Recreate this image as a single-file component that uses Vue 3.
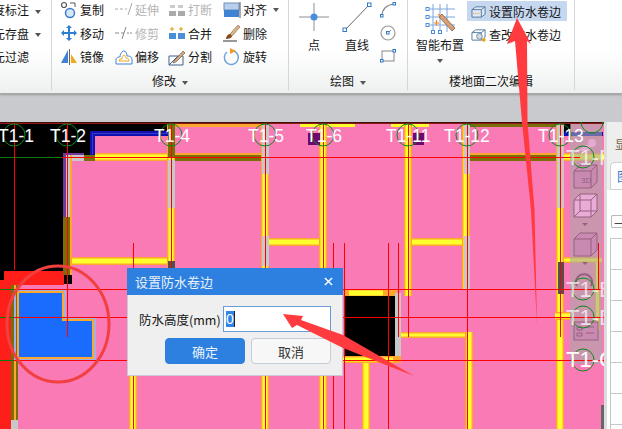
<template>
  <div class="app">
    <!-- Ribbon -->
    <header class="ribbon">
      <section class="group group-cut">
        <div class="cut-row"><span>度标注</span><i class="caret"></i></div>
        <div class="cut-row"><span>元存盘</span><i class="caret"></i></div>
        <div class="cut-row"><span>元过滤</span></div>
      </section>

      <section class="group group-modify">
        <div class="tools">
          <div class="tool">
            <svg viewBox="0 0 18 18"><circle cx="4" cy="4" r="2.500" fill="none" stroke="#555" stroke-width="1.200"/><circle cx="10" cy="12" r="4.500" fill="#d5e6f7" stroke="#3d7cc9" stroke-width="1.500"/><path d="M10 2h5v4" fill="none" stroke="#555"/></svg>
            <span>复制</span>
          </div>
          <div class="tool off">
            <svg viewBox="0 0 18 18"><path d="M0 8h3M5 8h3M10 8h2M13 14l4-12" stroke="#aaa" fill="none"/></svg>
            <span>延伸</span>
          </div>
          <div class="tool off">
            <svg viewBox="0 0 18 18"><path d="M2 4h5v3H2zM10 4h5v3h-5z" fill="#ccc"/><path d="M1 10h7v5H1zM10 10h7v5h-7z" fill="#aaa"/></svg>
            <span>打断</span>
          </div>
          <div class="tool">
            <svg viewBox="0 0 18 18"><rect x="1" y="2" width="15" height="7" fill="#b8d0ee" stroke="#6b8fb8"/><rect x="1" y="9" width="15" height="7" fill="#3f83d4"/><path d="M17 1v16" stroke="#555"/></svg>
            <span>对齐</span><i class="caret"></i>
          </div>
          <div class="tool">
            <svg viewBox="0 0 18 18"><path d="M9 1l3 3h-2v4h4V6l3 3-3 3v-2h-4v4h2l-3 3-3-3h2v-4H4v2L1 9l3-3v2h4V4H6z" fill="#2f7fd0"/></svg>
            <span>移动</span>
          </div>
          <div class="tool off">
            <svg viewBox="0 0 18 18"><path d="M0 9h4M6 9h3M12 9h2M15 9h2M7 15l4-12" stroke="#888" fill="none"/></svg>
            <span>修剪</span>
          </div>
          <div class="tool">
            <svg viewBox="0 0 18 18"><path d="M1 9h7v6H1zM10 9h7v6h-7z" fill="#4a8ed8"/><path d="M4 3v4M2 5h4M13 3v4M11 5h4" stroke="#e8a020" stroke-width="1.200"/></svg>
            <span>合并</span>
          </div>
          <div class="tool">
            <svg viewBox="0 0 18 18"><path d="M7 10l8-9 2 2-8 9z" fill="#d9b98a" stroke="#7a5a3a" stroke-width=".6"/><path d="M3 15c0-3 2-5 4-5l2 2c0 2-3 3-6 3z" fill="#8a4a20"/><path d="M0 17h14" stroke="#333"/></svg>
            <span>删除</span>
          </div>
          <div class="tool">
            <svg viewBox="0 0 18 18"><path d="M8 2L1 15h7z" fill="#3f83d4"/><path d="M11 6l6 9h-6z" fill="#f2a81d"/><path d="M9.500 1v16" stroke="#666"/></svg>
            <span>镜像</span>
          </div>
          <div class="tool">
            <svg viewBox="0 0 18 18"><path d="M1 12c0-3 3-3 4-3 0-3 2-6 4-6s3 3 3 5c2 0 5 0 5 4v4H1z" fill="#fff" stroke="#3f83d4"/><path d="M4 13c0-2 2-2 3-2 0-2 1-4 2-4s2 2 2 3c2 0 3 1 3 3z" fill="none" stroke="#f2a81d"/></svg>
            <span>偏移</span>
          </div>
          <div class="tool">
            <svg viewBox="0 0 18 18"><path d="M1 8h14v9H1z" fill="none" stroke="#44608c"/><path d="M6 13l9-10 2 2-9 9-3 1z" fill="#d9a77a" stroke="#555" stroke-width=".6"/><path d="M1 17l9-9" stroke="#44608c"/></svg>
            <span>分割</span>
          </div>
          <div class="tool">
            <svg viewBox="0 0 18 18"><path d="M11 3a7 7 0 1 1-7 1" fill="none" stroke="#6fa3dc" stroke-width="1.500"/><path d="M7 0l6 3-6 3z" fill="#f29a2e"/></svg>
            <span>旋转</span>
          </div>
        </div>
        <div class="group-label">修改<i class="caret"></i></div>
      </section>

      <section class="group group-draw">
        <div class="draw-row">
          <div class="big-tool tool-point">
            <svg viewBox="0 0 30 30" width="30" height="30"><path d="M0 15h30M15 1v28" stroke="#8a9098"/><circle cx="15" cy="15" r="3.500" fill="#4a8de0"/></svg>
            <span>点</span>
          </div>
          <div class="big-tool tool-line">
            <svg viewBox="0 0 30 30" width="30" height="30"><path d="M3 28L27 3" stroke="#666"/><rect x="1" y="26" width="3.500" height="3.500" fill="#fff" stroke="#2f78c8"/><rect x="25.500" y="1" width="3.500" height="3.500" fill="#fff" stroke="#2f78c8"/></svg>
            <span>直线</span>
          </div>
          <div class="small-tools">
            <svg viewBox="0 0 16 16"><path d="M2 14C2 7 7 3 14 2" fill="none" stroke="#888" stroke-width="1.200"/><rect x="0.500" y="12.500" width="2.500" height="2.500" fill="#fff" stroke="#2f78c8"/><rect x="13" y="0.500" width="2.500" height="2.500" fill="#fff" stroke="#2f78c8"/></svg>
            <svg viewBox="0 0 16 16"><circle cx="8" cy="8" r="7" fill="none" stroke="#999" stroke-width="1.200"/><path d="M8 8l3-3" stroke="#888"/><rect x="6.500" y="6.500" width="2.500" height="2.500" fill="#fff" stroke="#2f78c8"/></svg>
            <svg viewBox="0 0 16 14"><rect x="2" y="2" width="12" height="10" fill="none" stroke="#888"/><rect x="0.500" y="10.500" width="2.500" height="2.500" fill="#fff" stroke="#2f78c8"/><rect x="13" y="0.500" width="2.500" height="2.500" fill="#fff" stroke="#2f78c8"/></svg>
          </div>
        </div>
        <div class="group-label">绘图<i class="caret"></i></div>
      </section>

      <section class="group group-floor">
        <div class="floor-row">
          <div class="big-tool tool-smart">
            <svg viewBox="0 0 30 32" width="30" height="32"><path d="M8 1v28M15 1v28M22 1v28M3 6h27M3 14h27M3 22h27" stroke="#7da8dc"/><rect x="1" y="4.500" width="3" height="3" fill="#fff" stroke="#4a8de0"/><rect x="1" y="12.500" width="3" height="3" fill="#fff" stroke="#4a8de0"/><rect x="1" y="20.500" width="3" height="3" fill="#fff" stroke="#4a8de0"/><rect x="6.500" y="27.500" width="3" height="3" fill="#fff" stroke="#4a8de0"/><rect x="13.500" y="27.500" width="3" height="3" fill="#fff" stroke="#4a8de0"/><path d="M14 14l3-3 13 14-3 3z" fill="#d8a070" stroke="#6d5a50" stroke-width=".7"/><path d="M13 11l3 3M9 20h5M11.500 17v6" stroke="#f0862a" stroke-width="1.200"/></svg>
            <span>智能布置</span>
            <i class="caret caret-below"></i>
          </div>
          <div class="edge-tools">
            <div class="edge-tool active">
              <svg viewBox="0 0 16 16"><path d="M1 6l4-3h10v8l-4 3H1z" fill="#dfe9f5" stroke="#527a9a"/><path d="M1 6h10v8M11 6l4-3" fill="none" stroke="#527a9a"/><path d="M2 10h8" stroke="#e0953a" stroke-dasharray="1 1"/></svg>
              <span>设置防水卷边</span>
            </div>
            <div class="edge-tool">
              <svg viewBox="0 0 16 16"><path d="M1 6l4-3h10v8l-4 3H1z" fill="#fff" stroke="#527a9a"/><path d="M1 6h10v8M11 6l4-3" fill="none" stroke="#527a9a"/><circle cx="9" cy="10" r="3" fill="#cfe0f2" stroke="#789"/><rect x="12" y="12" width="3.500" height="3.500" fill="#f2a020" transform="rotate(45 13.700 13.700)"/></svg>
              <span>查改防水卷边</span>
            </div>
          </div>
        </div>
        <div class="group-label">楼地面二次编辑</div>
      </section>
    </header>

    <div class="band"></div>

    <div class="work">
      <!-- CAD canvas -->
      <main class="canvas">
        <svg class="drawing" viewBox="0 122 604 307" width="604" height="307">
          <rect x="0" y="122" width="604" height="307" fill="#000"/>
          <rect v-for="(r, i) in shapes" :key="i" :x="r[0]" :y="r[1]" :width="r[2]" :height="r[3]" :fill="r[4]"/>
          <path d="M15 290h50v28h30v42H15z" fill="none" stroke="#9fb2e6" stroke-width="2"/>
          <path d="M18 292h45v28h30v38H18z" fill="#1a6cff" stroke="#ffa62e" stroke-width="2"/>
          <path d="M92.500 155V133.500H168" fill="none" stroke="#1010b0" stroke-width="5"/>
          <path d="M92.500 154V133.500H168" fill="none" stroke="#3a3ad0" stroke-width="1"/>

          <!-- Floating view toolbar -->
          <rect x="570" y="124" width="32" height="240" fill="#a8a8a8" opacity=".6"/>
          <circle cx="592" cy="143" r="4" fill="#e7a9cf"/>
          <path d="M574 153l12-8h4v6h-12z" fill="#e7a9cf"/>
          <g fill="#c98ab2" stroke="#96607f">
            <path d="M574 171l6-6h17v17l-6 6h-17z"/>
            <path d="M574 171h17v17M591 171l6-6" fill="none"/>
          </g>
          <text x="581" y="183" class="mini">3D</text>
          <g fill="#e8acd6" stroke="#96607f">
            <path d="M574 200l6-6h17v17l-6 6h-17z"/>
            <path d="M574 200h17v17M591 200l6-6M580 194v17h17M574 217l6-6" fill="none"/>
          </g>
          <path d="M582 223h6l-3 3z" fill="#96607f"/>
          <g fill="#c98ab2" stroke="#96607f">
            <path d="M574 239l6-6h17v17l-6 6h-17z"/>
            <path d="M574 239h17v17M591 239l6-6" fill="none"/>
          </g>
          <path d="M582 262h6l-3 3z" fill="#96607f"/>
          <path d="M577 286a8 8 0 1 1 14 0" fill="none" stroke="#96607f" stroke-width="2"/>
          <rect x="574" y="322" width="24" height="18" fill="#c98ab2" stroke="#96607f"/>
          <path d="M577 327h5v3h-5zM577 333h5v3h-5zM586 327h8M586 333h8" stroke="#96607f" fill="none"/>

          <line v-for="(l, i) in lines" :key="'l' + i" :x1="l[0]" :y1="l[1]" :x2="l[2]" :y2="l[3]" :stroke="l[4] || '#ff0000'" stroke-width="1"/>
          <circle v-for="(c, i) in circles" :key="'c' + i" :cx="c[0]" :cy="c[1]" r="11" fill="none" stroke="#0c8a1c" stroke-width="1"/>
          <text v-for="a in axisLabels" :key="a.text + a.y" :x="a.x" :y="a.y" class="axis" :class="{ wide: a.wide }" :opacity="a.dim ? .7 : 1">{{ a.text }}</text>
        </svg>

        <!-- Dialog -->
        <div class="dialog">
          <div class="dialog-title">
            <span>设置防水卷边</span>
            <svg viewBox="0 0 10 10" width="9" height="9"><path d="M1 1l8 8M9 1L1 9" stroke="#fff" stroke-width="1.500"/></svg>
          </div>
          <div class="dialog-body">
            <div class="field">
              <label>防水高度(mm)</label>
              <div class="input"><span class="selected">0</span><i class="cursor"></i></div>
            </div>
            <div class="actions">
              <button class="btn primary">确定</button>
              <button class="btn">取消</button>
            </div>
          </div>
        </div>
      </main>

      <!-- Properties panel edge -->
      <aside class="side">
        <div class="side-head">显</div>
        <div class="side-tab">图</div>
        <div class="side-tool"><div class="side-minus">—</div></div>
        <div class="side-grid">
          <div v-for="n in 7" :key="n" class="side-row"></div>
        </div>
      </aside>
    </div>

    <!-- Annotations on top of everything -->
    <svg class="marks" viewBox="0 0 622 429" width="622" height="429">
      <ellipse cx="58" cy="324" rx="51" ry="58" fill="none" stroke="#f23f3f" stroke-width="3"/>
      <path d="M517 18L507 44L515 41L522 122L531 210L537 325L534.500 210L527.500 122L527 41L531 44Z" fill="#ff3b3f"/>
      <path d="M283 314L303 316L301 320L343 335L414 376L343 348L297 325L292 328Z" fill="#ff3b3f"/>
    </svg>
  </div>
</template>

<script setup>
const PINK = "#fa7ab6";
const YEL = "#ffff2e";
const ORG = "#ffa62e";
const OLV = "#7a6e08";
const GRY = "#c8c8c8";
const DRK = "#505050";
const RED = "#ff1f1a";

// vertical and horizontal wall: orange edge with a yellow core
const vw = (x, y, h) => [[x, y, 8, h, ORG], [x + 1.5, y, 5, h, YEL]];
const hw = (x, y, w, t = 8) => [[x, y, w, t, ORG], [x, y + 1.5, w, t - 3, YEL]];

const shapes = [
  [0, 122.5, 604, 1.5, "#8a1a14"],
  [72, 124, 532, 305, PINK],
  [18, 284, 60, 145, PINK],
  [0, 124, 95, 31, "#000"],
  [95, 124, 73, 10, "#000"],
  [0, 155, 63, 116, "#000"],

  // left side, red block and wall
  [4, 271, 60, 14, RED],
  [0, 280, 11, 149, RED],
  [11, 285, 7, 144, OLV],
  [14, 285, 2, 144, ORG],
  [11, 420, 7, 9, GRY],
  [63, 153, 21, 2, "#6b3a9a"],
  [63, 155, 3, 62, "#6b3a9a"],
  [66, 155, 6, 62, GRY],
  [70, 155, 2, 62, ORG],
  [63, 217, 9, 58, OLV],
  [70, 217, 2, 58, ORG],

  // top beams
  [72, 155, 12, 6, GRY],
  [84, 155, 11, 6, OLV],
  [95, 153, 73, 8, ORG],
  [95, 154.5, 73, 5, YEL],
  [175, 124, 86, 3, ORG],
  [175, 153, 87, 8, ORG],
  [175, 155, 87, 6, OLV],
  [470, 153, 88, 8, ORG],
  [470, 155, 88, 6, OLV],
  [470, 124, 88, 3, OLV],
  [300, 124, 55, 3, YEL],
  [391, 124, 38, 3, YEL],
  [563, 132, 40, 4, "#1010b0"],
  [563, 124, 8, 8, "#000"],
  [564, 153, 40, 8, ORG],
  [564, 154.5, 40, 5, YEL],

  // columns
  ...vw(167, 124, 145),
  [168, 124, 7, 33, OLV],
  [168, 160, 7, 48, GRY],
  [168, 261, 7, 8, DRK],
  ...vw(261, 124, 305),
  [262, 124, 7, 50, GRY],
  [262, 236, 7, 30, GRY],
  ...vw(319, 124, 305),
  ...vw(404, 124, 172),
  ...vw(462, 124, 166),
  [464, 124, 6, 50, GRY],
  [464, 236, 6, 54, GRY],
  ...vw(556, 124, 305),
  [557, 124, 7, 84, GRY],
  [558, 262, 6, 32, DRK],
  [601, 405, 3, 24, "#666"],

  // horizontal walls
  ...hw(72, 257, 95),
  ...hw(269, 238, 50),
  ...hw(412, 238, 50),
  ...hw(564, 257, 38, 6),
  [595, 262, 5, 68, ORG],
  [596, 262, 3, 68, YEL],

  // lower room
  [345, 289, 52, 8, ORG],
  [349, 290.5, 34, 5, YEL],
  [344, 296, 52, 60, "#000"],
  [395, 293, 6, 70, GRY],
  [343, 356, 58, 7, ORG],
  [343, 357.5, 50, 4, YEL],
  ...vw(362, 363, 66),
  ...hw(401, 332, 68, 6),
  ...vw(465, 332, 97),
  ...hw(555, 312, 15, 8),

  // walls under the dialog
  ...vw(129, 376, 53),

  // purple column stubs
  [308, 133, 12, 12, "#6a0a70"],
  [413, 133, 11, 12, "#6a0a70"],
];

const lines = [
  [0, 157.5, 62, 157.5, "#0a7a12"],
  [62, 157.5, 580, 157.5],
  [0, 289.5, 14, 289.5, "#0a7a12"],
  [14, 289.5, 604, 289.5],
  [0, 317.5, 14, 317.5, "#0a7a12"],
  [14, 317.5, 604, 317.5],
  [0, 360.5, 14, 360.5, "#0a7a12"],
  [14, 360.5, 604, 360.5],
  [14.5, 124, 14.5, 270],
  [67.5, 124, 67.5, 337],
  [171.5, 124, 171.5, 270],
  [265.5, 124, 265.5, 429],
  [323.5, 124, 323.5, 429],
  [408.5, 124, 408.5, 337],
  [467.5, 124, 467.5, 429],
  [560.5, 124, 560.5, 337],
  [133.5, 243, 133.5, 429],
  [333.5, 243, 333.5, 429],
  [344.5, 243, 344.5, 429],
  [388.5, 243, 388.5, 429],
  [398.5, 243, 398.5, 337],
  [598.5, 243, 598.5, 290],
];

const circles = [
  [14, 135], [67, 135], [171, 135], [265, 135], [323, 135], [408, 135], [467, 135], [560, 135],
  [592, 122], [583, 157], [583, 289], [583, 317], [583, 360],
];

const axisLabels = [
  { text: "T1-1", x: -2, y: 142 },
  { text: "T1-2", x: 50, y: 142 },
  { text: "T1-4", x: 154, y: 142 },
  { text: "T1-5", x: 248, y: 142 },
  { text: "T1-6", x: 306, y: 142 },
  { text: "T1-11", x: 386, y: 142 },
  { text: "T1-12", x: 444, y: 142 },
  { text: "T1-13", x: 538, y: 142 },
  { text: "T1-F", x: 566, y: 165, dim: true, wide: true },
  { text: "T1-E", x: 566, y: 297, dim: true, wide: true },
  { text: "T1-D", x: 566, y: 325, dim: true, wide: true },
  { text: "T1-C", x: 566, y: 367, wide: true },
];
</script>

<style scoped>
.app {
  position: relative;
  width: 622px;
  height: 429px;
  overflow: hidden;
  display: flex;
  flex-direction: column;
  font-family: "Noto Sans CJK SC", "Liberation Sans", sans-serif;
  font-size: 12px;
  color: #151515;
}

.ribbon {
  height: 93px;
  flex: none;
  display: flex;
  background: linear-gradient(#fff 55%, #eef0f0);
  border-bottom: 1px solid #a8a8a8;
  box-shadow: 0 1px 2px rgba(0, 0, 0, 0.25);
  position: relative;
}

.group {
  position: relative;
  display: flex;
  flex-direction: column;
  height: 90px;
  border-right: 1px solid #d4d6d8;
  flex: none;
}

.group-label {
  position: absolute;
  left: 0;
  right: 0;
  bottom: 1px;
  text-align: center;
  line-height: 16px;
}

.caret {
  display: inline-block;
  width: 0;
  height: 0;
  margin-left: 6px;
  vertical-align: middle;
  border-left: 3.5px solid transparent;
  border-right: 3.5px solid transparent;
  border-top: 4px solid #555;
}

.group-cut {
  width: 51px;
  overflow: hidden;
  margin-top: -2px;
  height: 92px;
}

.cut-row {
  height: 23.5px;
  line-height: 23.5px;
  white-space: nowrap;
  margin-left: -7px;
}

.group-modify {
  width: 237px;
  padding-left: 8px;
  box-sizing: border-box;
}

.tools {
  display: grid;
  grid-template-columns: 55px 53px 55px 1fr;
  grid-auto-rows: 23.5px;
  margin-top: -2px;
}

.tool {
  display: flex;
  align-items: center;
  gap: 2px;
  white-space: nowrap;
}

.tool svg {
  width: 18px;
  height: 18px;
  flex: none;
}

.tool .caret {
  margin-left: 4px;
}

.tool.off {
  color: #b4b4b4;
}

.group-draw {
  width: 118px;
}

.draw-row {
  display: flex;
  padding: 2px 0 0 3px;
}

.big-tool {
  display: flex;
  flex-direction: column;
  align-items: center;
  gap: 6px;
  line-height: 14px;
}

.tool-point {
  width: 44px;
}

.tool-line {
  width: 42px;
}

.small-tools {
  display: flex;
  flex-direction: column;
  gap: 7px;
  margin-left: 2px;
}

.small-tools svg {
  width: 16px;
  height: 16px;
}

.group-floor {
  width: 166px;
}

.floor-row {
  display: flex;
  align-items: flex-start;
}

.tool-smart {
  width: 58px;
  padding: 3px 0 0 3px;
  gap: 3px;
}

.caret-below {
  margin: 4px 0 0;
}

.edge-tools {
  display: flex;
  flex-direction: column;
  gap: 3px;
  padding-top: 1px;
  margin-left: -2px;
}

.edge-tool {
  width: 100px;
  height: 20px;
  display: flex;
  align-items: center;
  gap: 3px;
  padding-left: 4px;
  box-sizing: border-box;
  white-space: nowrap;
}

.edge-tool svg {
  width: 15px;
  height: 15px;
  flex: none;
}

.edge-tool.active {
  background: #c5d8f0;
}

.band {
  height: 28px;
  flex: none;
  background: #c8cacd;
}

.work {
  flex: 1;
  min-height: 0;
  display: flex;
}

.canvas {
  position: relative;
  width: 604px;
  flex: none;
}

.drawing {
  display: block;
}

.axis {
  font-family: "Liberation Sans", sans-serif;
  font-size: 17.5px;
  fill: #fff;
}

.axis.wide {
  font-size: 22px;
}

.mini {
  font-family: "Liberation Sans", sans-serif;
  font-size: 8px;
  fill: #96607f;
}

.dialog {
  position: absolute;
  left: 127px;
  top: 146px;
  width: 216px;
  height: 108px;
  box-sizing: border-box;
  background: #efefef;
  border: 1px solid #c6cbd6;
  border-top: 0;
}

.dialog-title {
  height: 27px;
  margin: 0 -1px;
  padding: 0 10px 0 8px;
  background: #2e80e0;
  color: #e8f0fa;
  font-size: 13px;
  display: flex;
  align-items: center;
  justify-content: space-between;
}

.dialog-body {
  padding: 11px 11px 0 11px;
}

.field {
  display: flex;
  align-items: center;
  justify-content: space-between;
  font-size: 12.5px;
  white-space: nowrap;
}

.input {
  width: 108px;
  height: 26px;
  flex: none;
  box-sizing: border-box;
  background: #fff;
  border: 1px solid #6a9ad8;
  display: flex;
  align-items: center;
  padding-left: 2px;
  font-family: "Liberation Sans", sans-serif;
  font-size: 14px;
}

.selected {
  background: #2f86e8;
  color: #fff;
  line-height: 16px;
}

.cursor {
  width: 1px;
  height: 16px;
  background: #222;
}

.actions {
  display: flex;
  justify-content: flex-end;
  gap: 6px;
  margin-top: 6px;
}

.btn {
  width: 80px;
  height: 26px;
  box-sizing: border-box;
  border: 1px solid #c4ccd8;
  border-radius: 4px;
  background: #f7f7f7;
  color: #333;
  font-family: inherit;
  font-size: 13px;
  padding: 0;
}

.btn.primary {
  background: #2e80e0;
  border-color: #2e80e0;
  color: #eaf2fb;
}

.side {
  flex: 1;
  min-width: 0;
  background: #eeeeee;
  border-left: 3px solid #dcdcdc;
  box-sizing: border-box;
  overflow: hidden;
}

.side-head {
  height: 40px;
  padding: 15px 0 0 8px;
  box-sizing: border-box;
  line-height: 14px;
  font-size: 11px;
  color: #6b5a40;
  white-space: nowrap;
}

.side-tab {
  height: 28px;
  margin-left: 3px;
  padding-left: 6px;
  background: #fff;
  border: 1px solid #d0d0d0;
  border-right: 0;
  border-radius: 5px 0 0 0;
  color: #2f78d0;
  font-size: 13px;
  line-height: 26px;
  box-sizing: border-box;
  white-space: nowrap;
}

.side-tool {
  height: 42px;
  padding: 25px 0 0 4px;
  background: #fff;
  box-sizing: border-box;
}

.side-minus {
  height: 13px;
  line-height: 11px;
  padding-left: 2px;
  border: 1px solid #b8b8b8;
  border-right: 0;
  border-radius: 2px 0 0 2px;
  box-sizing: border-box;
  overflow: hidden;
  white-space: nowrap;
}

.side-grid {
  background: #fff;
  padding-top: 6px;
}

.side-row {
  height: 31px;
  box-sizing: border-box;
  border-top: 1px solid #c8c8c8;
  margin-left: 3px;
  border-left: 1px solid #c8c8c8;
}

.marks {
  position: absolute;
  left: 0;
  top: 0;
  pointer-events: none;
}
</style>
